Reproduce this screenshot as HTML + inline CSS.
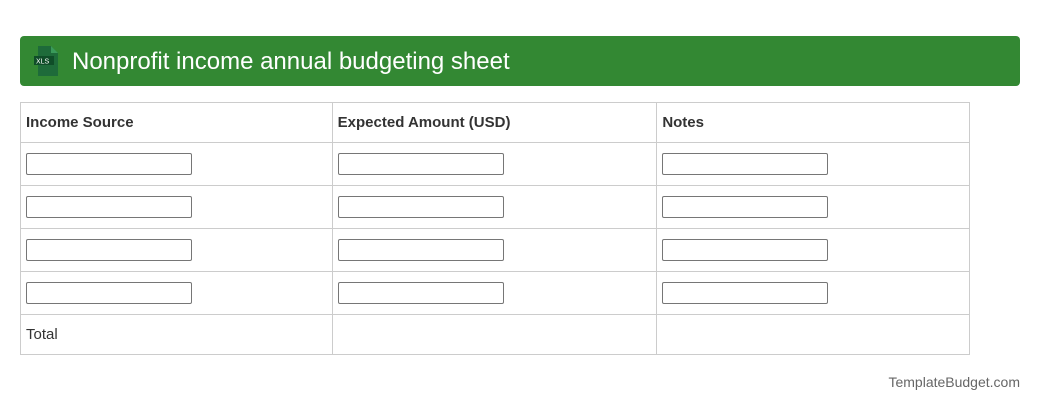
<!DOCTYPE html>
<html><head><style>
body{margin:0;background:#fff;font-family:"Liberation Sans",Arial,sans-serif;width:1040px;height:412px;position:relative;overflow:hidden}
.hdr{position:absolute;left:20px;top:36px;width:1000px;height:50px;background:#338833;border-radius:4px}
.hdr .t{position:absolute;left:52px;top:12px;color:#fff;font-size:24px;line-height:28px}
table{position:absolute;left:20px;top:102px;border-collapse:collapse;width:950px}
td{border:1px solid #ccc;padding:0 5px;font-size:16px;color:#333;vertical-align:middle}
tr.h td{height:39px;font-weight:bold;font-size:15px}
tr.r td{height:42px}
tr.tt td{height:39px;font-size:15px}
.in{width:164px;height:20px;border:1px solid #767676;border-radius:2px}
.ft{position:absolute;right:20px;top:374px;font-size:14px;color:#666}
</style></head><body>
<div class="hdr">
<svg style="position:absolute;left:14px;top:10px" width="26" height="30" viewBox="0 0 26 30">
<path d="M4 0h13l7 7v23H4z" fill="#1e6b3a"/><path d="M17 0v7h7z" fill="#3a9a5a"/>
<rect x="0" y="10" width="20" height="9" fill="#0f4d28"/>
<text x="2" y="17.5" font-size="7" fill="#fff" font-family="Liberation Sans">XLS</text>
</svg>
<div class="t">Nonprofit income annual budgeting sheet</div></div>
<table>
<colgroup><col style="width:312px"><col style="width:325px"><col style="width:313px"></colgroup>
<tr class="h"><td>Income Source</td><td>Expected Amount (USD)</td><td>Notes</td></tr>
<tr class="r"><td><div class="in"></div></td><td><div class="in"></div></td><td><div class="in"></div></td></tr>
<tr class="r"><td><div class="in"></div></td><td><div class="in"></div></td><td><div class="in"></div></td></tr>
<tr class="r"><td><div class="in"></div></td><td><div class="in"></div></td><td><div class="in"></div></td></tr>
<tr class="r"><td><div class="in"></div></td><td><div class="in"></div></td><td><div class="in"></div></td></tr>
<tr class="tt"><td>Total</td><td></td><td></td></tr>
</table>
<div class="ft">TemplateBudget.com</div>
</body></html>
